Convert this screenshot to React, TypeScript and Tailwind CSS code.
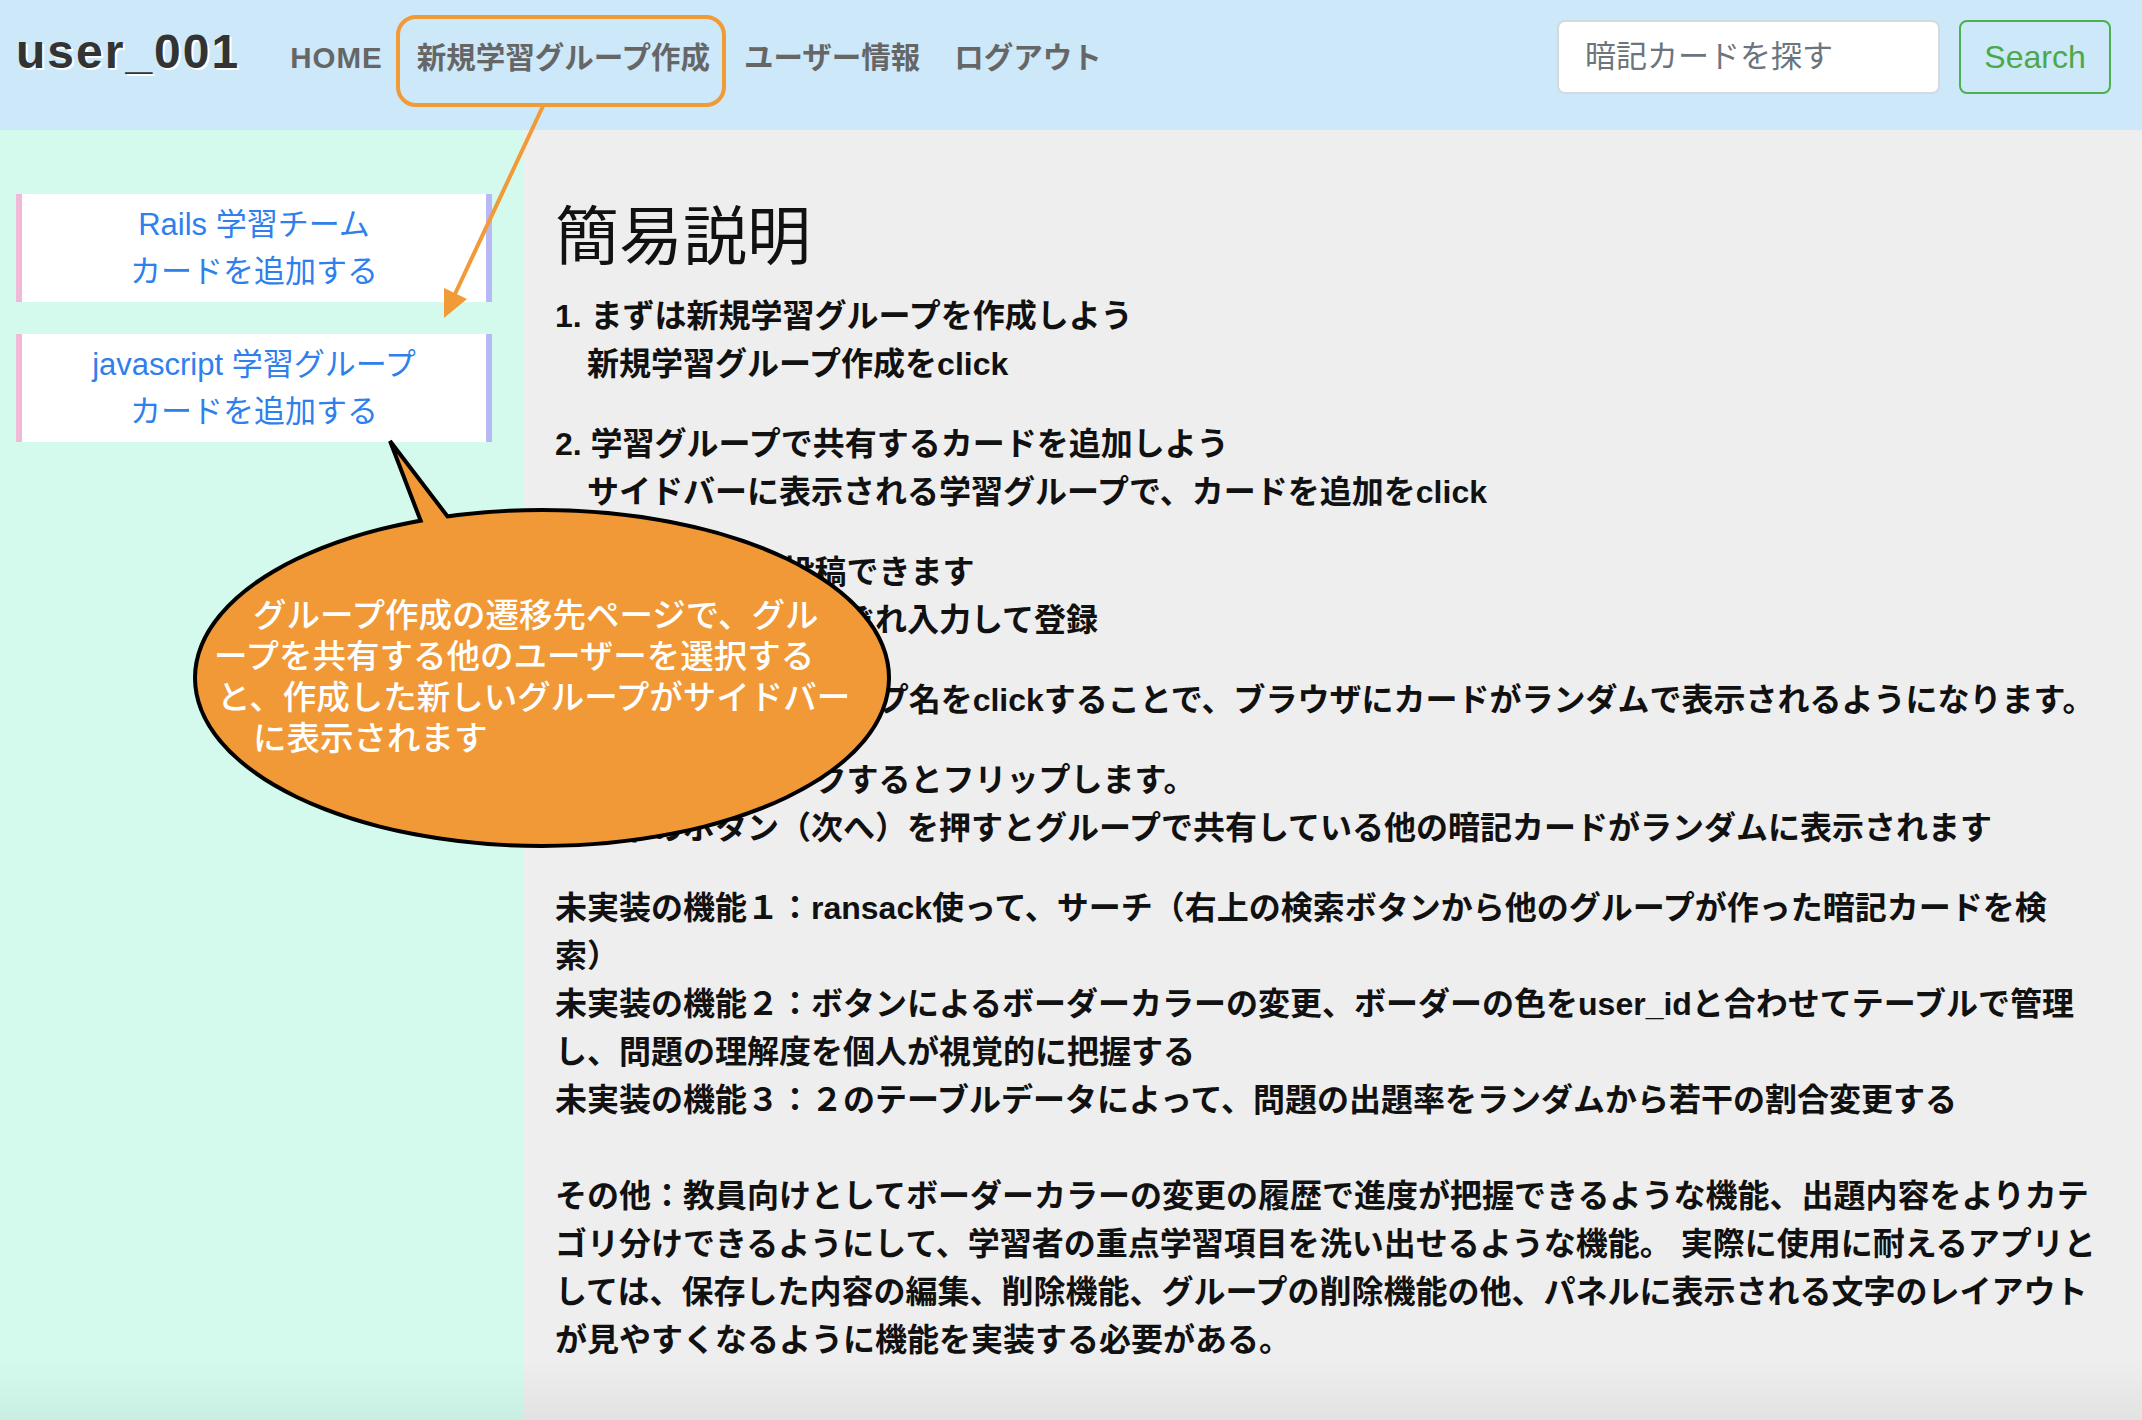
const font = "font-['Liberation_Sans','Noto_Sans_CJK_JP',sans-serif]";

const navItems = ['HOME', '新規学習グループ作成', 'ユーザー情報', 'ログアウト'];

const groups = [
  { name: 'Rails 学習チーム' },
  { name: 'javascript 学習グループ' },
];

// each paragraph: first line, then indented continuation lines
const steps = [
  ['1. まずは新規学習グループを作成しよう', '新規学習グループ作成をclick'],
  ['2. 学習グループで共有するカードを追加しよう', 'サイドバーに表示される学習グループで、カードを追加をclick'],
  ['3. 暗記カードを投稿できます', '問題と解答をそれぞれ入力して登録'],
  ['4. サイドバーのグループ名をclickすることで、ブラウザにカードがランダムで表示されるようになります。'],
  ['5. カードをクリックするとフリップします。', '右下のボタン（次へ）を押すとグループで共有している他の暗記カードがランダムに表示されます'],
];

const todo = [
  '未実装の機能１：ransack使って、サーチ（右上の検索ボタンから他のグループが作った暗記カードを検',
  '索）',
  '未実装の機能２：ボタンによるボーダーカラーの変更、ボーダーの色をuser_idと合わせてテーブルで管理',
  'し、問題の理解度を個人が視覚的に把握する',
  '未実装の機能３：２のテーブルデータによって、問題の出題率をランダムから若干の割合変更する',
];

const others = [
  'その他：教員向けとしてボーダーカラーの変更の履歴で進度が把握できるような機能、出題内容をよりカテ',
  'ゴリ分けできるようにして、学習者の重点学習項目を洗い出せるような機能。 実際に使用に耐えるアプリと',
  'しては、保存した内容の編集、削除機能、グループの削除機能の他、パネルに表示される文字のレイアウト',
  'が見やすくなるように機能を実装する必要がある。',
];

const balloonLines = [
  { text: 'グループ作成の遷移先ページで、グル', indent: 'ml-[39px]' },
  { text: 'ープを共有する他のユーザーを選択する', indent: 'ml-0' },
  { text: 'と、作成した新しいグループがサイドバー', indent: 'ml-[3px]' },
  { text: 'に表示されます', indent: 'ml-[39px]' },
];

const App = () => {
  return (
    <div className={`relative w-[2142px] h-[1420px] overflow-hidden flex flex-col ${font}`}>
      {/* Navbar */}
      <header className="h-[130px] shrink-0 flex items-center bg-[#cce8f9] pl-4 pr-[31px] pb-[16px]">
        <span className="text-[48px] font-bold tracking-[2px] text-[#333] leading-none mb-[10px] [text-shadow:2px_2px_0_#ffffff]">
          user_001
        </span>
        <nav className="ml-[33px] flex items-center mt-[2px]">
          {navItems.map((item) => (
            <a
              key={item}
              className={`px-[17px] text-[29.5px] font-bold text-[#666] leading-none ${item === 'HOME' ? 'tracking-[1px]' : ''}`}
            >
              {item}
            </a>
          ))}
        </nav>
        <form className="ml-auto flex items-center gap-[19px]">
          <input
            placeholder="暗記カードを探す"
            className="w-[383px] h-[74px] rounded-[8px] border-2 border-[#d3d9df] bg-white px-[26px] text-[31px] placeholder:text-[#6c757d] outline-none"
          />
          <button
            type="button"
            className="w-[152px] h-[74px] rounded-[8px] border-2 border-[#4caf50] text-[32px] text-[#4aa94a]"
          >
            Search
          </button>
        </form>
      </header>

      <div className="flex flex-1">
        {/* Sidebar */}
        <aside className="w-[523px] shrink-0 bg-[#d4faee] pl-4 pr-[31px] pt-[64px] flex flex-col gap-[32px]">
          {groups.map((g) => (
            <div
              key={g.name}
              className="bg-white border-l-[6px] border-r-[6px] border-l-[#f2b8d8] border-r-[#b8b8f6] py-[7px] text-center text-[31px] leading-[47px] text-[#2f7fec]"
            >
              <div>{g.name}</div>
              <div>カードを追加する</div>
            </div>
          ))}
        </aside>

        {/* Main */}
        <main className="flex-1 bg-[#eeeeee] px-8 pt-[69px] text-[#111]">
          <h1 className="text-[64px] leading-[77px] font-normal mb-4">簡易説明</h1>
          <div className="text-[32px] leading-[48px] font-bold whitespace-nowrap">
            {steps.map((lines, i) => (
              <div key={i} className="mb-8">
                {lines.map((line, j) => (
                  <div key={j} className={j > 0 ? 'pl-8' : ''}>
                    {line}
                  </div>
                ))}
              </div>
            ))}
            <div className="mb-12">
              {todo.map((line) => (
                <div key={line}>{line}</div>
              ))}
            </div>
            <div>
              {others.map((line) => (
                <div key={line}>{line}</div>
              ))}
            </div>
          </div>
        </main>
      </div>

      {/* bottom shade */}
      <div className="absolute inset-x-0 bottom-0 h-[60px] bg-linear-to-b from-transparent to-black/[0.05] pointer-events-none" />

      {/* annotations */}
      <svg
        className="absolute inset-0 pointer-events-none"
        width={2142}
        height={1420}
        viewBox="0 0 2142 1420"
      >
        <rect x={398} y={17} width={326} height={88} rx={18} fill="none" stroke="#f19a38" strokeWidth={4} />
        <line x1={543} y1={106} x2={455} y2={294} stroke="#f19a38" strokeWidth={4} />
        <polygon points="444,318 444,288 467,299" fill="#f19a38" />

        <ellipse cx={542} cy={678} rx={345} ry={166} fill="#f19937" stroke="#000" strokeWidth={8} />
        <path d="M430 545 L390 441 L464 538" fill="#f19937" stroke="#000" strokeWidth={4} strokeLinejoin="miter" />
        <ellipse cx={542} cy={678} rx={345} ry={166} fill="#f19937" />
      </svg>

      <div className="absolute left-[214px] top-[595px] text-[33.5px] leading-[41px] font-medium text-white whitespace-nowrap">
        {balloonLines.map((l) => (
          <div key={l.text} className={l.indent}>
            {l.text}
          </div>
        ))}
      </div>
    </div>
  );
};

export default App;
